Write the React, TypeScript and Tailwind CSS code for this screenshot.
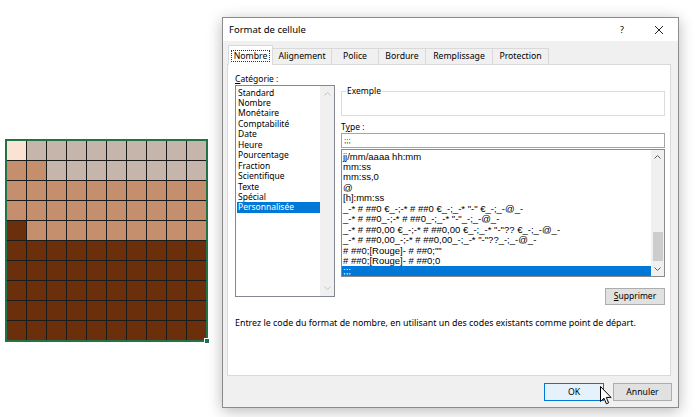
import React from "react";

const CELL_BG: Record<string, string> = {
  L: "bg-[#fbe3d4]",
  G: "bg-[#c5b5ab]",
  T: "bg-[#c58e6d]",
  D: "bg-[#6b2f0c]",
};

const ROWS = [
  "LGGGGGGGGG",
  "TTGGGGGGGG",
  "TTTTTTTTTT",
  "TTTTTTTTTT",
  "DTTTTTTTTT",
  "DDDDDDDDDD",
  "DDDDDDDDDD",
  "DDDDDDDDDD",
  "DDDDDDDDDD",
  "DDDDDDDDDD",
];

const TABS = [
  { label: "Nombre", width: "w-[45px]" },
  { label: "Alignement", width: "w-[60px]" },
  { label: "Police", width: "w-[48px]" },
  { label: "Bordure", width: "w-[48px]" },
  { label: "Remplissage", width: "w-[68px]" },
  { label: "Protection", width: "w-[57px]" },
];

const CATEGORIES = [
  "Standard",
  "Nombre",
  "Monétaire",
  "Comptabilité",
  "Date",
  "Heure",
  "Pourcentage",
  "Fraction",
  "Scientifique",
  "Texte",
  "Spécial",
  "Personnalisée",
];

const TYPES = [
  "jj/mm/aaaa hh:mm",
  "mm:ss",
  "mm:ss,0",
  "@",
  "[h]:mm:ss",
  '_-* # ##0 €_-;-* # ##0 €_-;_-* "-" €_-;_-@_-',
  '_-* # ##0_-;-* # ##0_-;_-* "-"_-;_-@_-',
  '_-* # ##0,00 €_-;-* # ##0,00 €_-;_-* "-"?? €_-;_-@_-',
  '_-* # ##0,00_-;-* # ##0,00_-;_-* "-"??_-;_-@_-',
  '# ##0;[Rouge]- # ##0;""',
  "# ##0;[Rouge]- # ##0;0",
  ";;;",
];

function Chevron({ up, dim }: { up?: boolean; dim?: boolean }) {
  return (
    <svg width="7" height="4" viewBox="0 0 7 4" className={up ? "" : "rotate-180"}>
      <polyline
        points="0.5,3.5 3.5,0.5 6.5,3.5"
        fill="none"
        stroke={dim ? "#c2c2c2" : "#606060"}
        strokeWidth="1"
      />
    </svg>
  );
}

function Sheet() {
  return (
    <div className="relative ml-[5px] mt-[139px] h-[203px] w-[203px] shrink-0 border-2 border-[#217346]">
      <div className="grid h-full w-full grid-cols-10 grid-rows-10 gap-px bg-[#1b1b1b]">
        {ROWS.flatMap((row, r) =>
          row.split("").map((c, i) => <div key={`${r}-${i}`} className={CELL_BG[c]} />),
        )}
      </div>
      <div className="absolute -bottom-[4px] -right-[4px] h-[6px] w-[6px] border border-white bg-[#217346]" />
    </div>
  );
}

function Dialog() {
  return (
    <div className="ml-[14px] mt-[17px] flex h-[391px] w-[457px] shrink-0 flex-col border border-[#8b8b8b] bg-[#f0f0f0] shadow-[0_3px_14px_rgba(0,0,0,0.28)]">
      {/* title bar */}
      <div className="flex h-[23px] shrink-0 items-center bg-white pl-[6px] text-[9.5px] leading-none">
        <span>Format de cellule</span>
        <span className="ml-auto w-[20px] text-center text-[9px]">?</span>
        <span className="ml-[17px] mr-[9px] flex w-[20px] justify-center">
          <svg width="10" height="10" viewBox="0 0 10 10">
            <path d="M1 1 L9 9 M9 1 L1 9" stroke="#222" strokeWidth="1" />
          </svg>
        </span>
      </div>

      {/* tabs */}
      <div className="flex h-[23px] shrink-0 items-end pl-[5px] text-[8.7px]">
        {TABS.map((t, i) =>
          i === 0 ? (
            <div
              key={t.label}
              className={`${t.width} relative z-10 -mb-px flex h-[20px] items-center justify-center border border-b-0 border-[#d9d9d9] bg-white`}
            >
              <span className="border border-dotted border-[#333] px-[2px] leading-[10px]">{t.label}</span>
            </div>
          ) : (
            <div
              key={t.label}
              className={`${t.width} -ml-px flex h-[16px] items-center justify-center border border-b-0 border-[#d9d9d9] bg-[#f0f0f0]`}
            >
              {t.label}
            </div>
          ),
        )}
      </div>

      {/* panel */}
      <div className="ml-[4px] flex h-[312px] w-[444px] shrink-0 flex-col border border-[#d9d9d9] bg-white text-[8.5px]">
        <div className="flex pl-[7px] pt-[7px]">
          {/* category column */}
          <div className="w-[100px]">
            <div className="h-[13px] leading-[13px]">
              <u>C</u>atégorie :
            </div>
            <div className="flex h-[212px] border border-[#828790]">
              <div className="flex-1 pt-[1.5px] pl-px">
                {CATEGORIES.map((c) => (
                  <div
                    key={c}
                    className={
                      c === "Personnalisée"
                        ? "bg-[#0078d7] pl-[1px] leading-[10.45px] text-white"
                        : "pl-[1px] leading-[10.45px]"
                    }
                  >
                    {c}
                  </div>
                ))}
              </div>
              <div className="flex w-[14px] flex-col bg-[#f0f0f0]">
                <div className="flex h-[16px] items-center justify-center">
                  <Chevron up dim />
                </div>
                <div className="flex-1" />
                <div className="flex h-[16px] items-center justify-center">
                  <Chevron dim />
                </div>
              </div>
            </div>
          </div>

          {/* type column */}
          <div className="ml-[6px] flex w-[324px] flex-col">
            <fieldset className="mt-[13px] h-[31px] border border-[#dcdcdc] pl-[4px]">
              <legend className="px-[1px] leading-[12px]">Exemple</legend>
            </fieldset>
            <div className="mt-[4px] h-[13px] leading-[13px]">
              T<u>y</u>pe :
            </div>
            <div className="flex h-[15px] items-center border border-[#a5a5a5] pl-[2px] font-['Liberation_Sans',sans-serif] text-[8px]">
              ;;;
            </div>
            <div className="mt-px flex h-[128px] border border-[#8a8a8a] font-['Liberation_Sans',sans-serif] text-[9.5px]">
              <div className="min-w-0 flex-1 overflow-hidden pt-[1.5px]">
                {TYPES.map((t) => (
                  <div
                    key={t}
                    className={
                      t === ";;;"
                        ? "whitespace-pre bg-[#0078d7] pl-px leading-[10.45px] text-white"
                        : "whitespace-pre pl-px leading-[10.45px]"
                    }
                  >
                    {t}
                  </div>
                ))}
              </div>
              <div className="flex w-[13px] flex-col bg-[#f0f0f0]">
                <div className="flex h-[15px] items-center justify-center">
                  <Chevron up />
                </div>
                <div className="mx-auto mt-[67px] h-[30px] w-[10px] bg-[#cdcdcd]" />
                <div className="flex-1" />
                <div className="flex h-[15px] items-center justify-center">
                  <Chevron />
                </div>
              </div>
            </div>
            <button
              type="button"
              className="ml-auto mt-[11px] h-[17px] w-[60px] border border-[#adadad] bg-[#e1e1e1] leading-none"
            >
              <u>S</u>upprimer
            </button>
          </div>
        </div>

        <p className="mt-[12px] pl-[7px] text-[8.9px] leading-[12px]">
          Entrez le code du format de nombre, en utilisant un des codes existants comme point de départ.
        </p>
      </div>

      {/* footer buttons */}
      <div className="mt-[7px] flex justify-end gap-[9px] pr-[6px] text-[8.7px]">
        <button type="button" className="h-[18px] w-[60px] border border-[#0078d7] bg-[#e5f1fb] leading-none">
          OK
        </button>
        <button type="button" className="h-[18px] w-[59px] border border-[#adadad] bg-[#e1e1e1] leading-none">
          Annuler
        </button>
      </div>
    </div>
  );
}

function Cursor() {
  return (
    <svg
      width="12"
      height="19"
      viewBox="0 0 12 19"
      className="pointer-events-none absolute left-[600px] top-[386px]"
    >
      <path
        d="M0.5 0.5 L0.5 15.5 L4 12.2 L6.4 17.8 L8.6 16.8 L6.3 11.4 L11 11.4 Z"
        fill="#fff"
        stroke="#000"
        strokeWidth="1"
        strokeLinejoin="round"
      />
    </svg>
  );
}

export default function App() {
  return (
    <div className="relative flex h-[417px] w-[698px] items-start overflow-hidden bg-white font-['Noto_Sans',sans-serif] text-black">
      <Sheet />
      <Dialog />
      <Cursor />
    </div>
  );
}
